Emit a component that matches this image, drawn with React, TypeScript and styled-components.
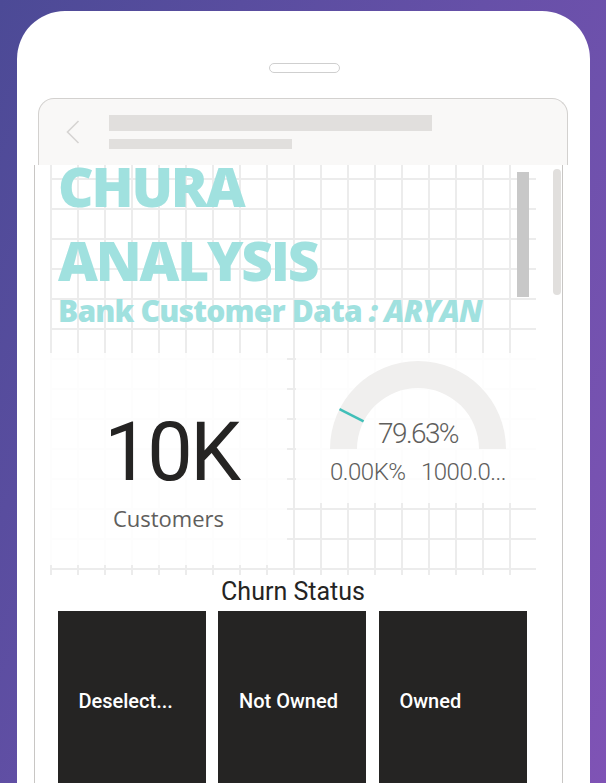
import React from "react";
import styled, { createGlobalStyle } from "styled-components";

const Global = createGlobalStyle`
  html, body { margin: 0; padding: 0; }
  body {
    width: 606px;
    height: 783px;
    overflow: hidden;
    background: linear-gradient(115deg, #4c4a96 0%, #6650a8 50%, #7f53b5 100%);
    font-family: "Open Sans", "Noto Sans", sans-serif;
  }
`;

const Phone = styled.div`
  margin: 11px 0 0 17px;
  width: 573px;
  height: 772px;
  background: #ffffff;
  border-radius: 48px 48px 0 0;
  display: flex;
  flex-direction: column;
  box-sizing: border-box;
`;

const Speaker = styled.div`
  align-self: center;
  margin-top: 52px;
  margin-left: 1px;
  width: 71px;
  height: 10px;
  box-sizing: border-box;
  border: 1px solid #cfcfcf;
  border-radius: 6px;
`;

const Header = styled.div`
  margin: 25px 0 0 21px;
  width: 530px;
  height: 67px;
  box-sizing: border-box;
  border: 1px solid #d3d1cf;
  border-bottom: none;
  border-radius: 16px 16px 0 0;
  background: #f9f8f7;
  display: flex;
  align-items: center;
  padding-left: 27px;
  gap: 29px;
`;

const Bars = styled.div`
  display: flex;
  flex-direction: column;
  gap: 8px;
`;

const Bar = styled.div<{ $w: number; $h: number }>`
  width: ${(p) => p.$w}px;
  height: ${(p) => p.$h}px;
  background: #e1dfdd;
`;

const Screen = styled.div`
  position: relative;
  margin-left: 17px;
  width: 529px;
  flex: 1;
  box-sizing: border-box;
  border-left: 1px solid #c8c6c4;
  border-right: 1px solid #c8c6c4;
  background: #ffffff;
  overflow: hidden;
  padding-left: 15px;
`;

const PageScroll = styled.div`
  position: absolute;
  left: 518px;
  top: 4px;
  width: 8px;
  height: 126px;
  border-radius: 4px;
  background: #e1dfdd;
`;

const Canvas = styled.div`
  width: 486px;
  height: 410px;
  display: flex;
  flex-direction: column;
  background-image: linear-gradient(to right, #ececec 0 2px, transparent 2px),
    linear-gradient(to bottom, #ececec 0 2px, transparent 2px);
  background-size: 27px 30px;
  background-position: 0 13px;
`;

const TitleBlock = styled.div`
  position: relative;
  height: 188px;
  flex: none;
  display: flow-root;
  padding-left: 8px;
  color: #a0e1df;
  font-family: "Open Sans", "Noto Sans", sans-serif;
  font-weight: 800;
`;

const BigLine = styled.div`
  font-size: 55px;
  line-height: 74px;
  letter-spacing: -2.2px;
  white-space: nowrap;
  &:first-child { margin-top: -16px; }
`;

const SubLine = styled.div`
  margin-top: -5px;
  font-size: 30px;
  line-height: 38px;
  letter-spacing: -0.8px;
  white-space: nowrap;
  em { font-style: italic; }
`;

const TitleScroll = styled.div`
  position: absolute;
  left: 467px;
  top: 7px;
  width: 12px;
  height: 125px;
  background: #c8c8c8;
`;

const CardRow = styled.div`
  display: flex;
  align-items: flex-start;
  gap: 9px;
`;

const Panel = styled.div<{ $w: number; $h: number }>`
  width: ${(p) => p.$w}px;
  height: ${(p) => p.$h}px;
  background: rgba(255, 255, 255, 0.86);
  display: flex;
  flex-direction: column;
  align-items: center;
  box-sizing: border-box;
`;

const BigNumber = styled.div`
  margin-top: 52px;
  font-family: Roboto, "Liberation Sans", sans-serif;
  font-size: 81px;
  line-height: 96px;
  letter-spacing: -2.5px;
  color: #252423;
  margin-left: 6px;
`;

const CardLabel = styled.div`
  margin-top: 3px;
  font-family: "Open Sans", "Noto Sans", sans-serif;
  font-size: 22px;
  line-height: 28px;
  color: #605e5c;
`;

const GaugeBox = styled.div`
  position: relative;
  margin-top: 8px;
  margin-left: 4px;
  width: 176px;
  height: 88px;
`;

const GaugeValue = styled.div`
  position: absolute;
  left: 0;
  right: 0;
  top: 56px;
  text-align: center;
  font-family: Roboto, "Liberation Sans", sans-serif;
  font-weight: 300;
  font-size: 28px;
  line-height: 34px;
  letter-spacing: -1.6px;
  color: #605e5c;
`;

const GaugeLabels = styled.div`
  margin-top: 8px;
  margin-left: 4px;
  width: 176px;
  display: flex;
  justify-content: space-between;
  font-family: Roboto, "Liberation Sans", sans-serif;
  font-weight: 300;
  font-size: 24px;
  line-height: 30px;
  letter-spacing: -0.5px;
  color: #605e5c;
`;

const Slicer = styled.div`
  width: 486px;
  display: flex;
  flex-direction: column;
  align-items: center;
  background: #ffffff;
`;

const SlicerTitle = styled.div`
  margin-top: 2px;
  font-family: Roboto, "Liberation Sans", sans-serif;
  font-size: 25px;
  line-height: 30px;
  color: #252423;
`;

const Tiles = styled.div`
  margin-top: 4px;
  display: flex;
  gap: 12.5px;
  margin-left: -2px;
`;

const Tile = styled.div`
  width: 148px;
  height: 180px;
  background: #252423;
  color: #ffffff;
  display: flex;
  align-items: center;
  padding-left: 21px;
  box-sizing: border-box;
  font-family: Roboto, "Liberation Sans", sans-serif;
  font-weight: 500;
  font-size: 20px;
  white-space: nowrap;
`;

const Chevron = () => (
  <svg width="14" height="24" viewBox="0 0 14 24" style={{ flex: "none" }}>
    <polyline points="12.5,1 1.5,12 12.5,23" fill="none" stroke="#d6d4d2" strokeWidth="1.6" />
  </svg>
);

const Gauge = () => {
  const cx = 88, cy = 88, ro = 88, ri = 61;
  const a = (26.9 * Math.PI) / 180;
  const x1 = cx - Math.cos(a) * ro, y1 = cy - Math.sin(a) * ro;
  const x2 = cx - Math.cos(a) * ri, y2 = cy - Math.sin(a) * ri;
  return (
    <svg width="176" height="88" viewBox="0 0 176 88">
      <path
        d={`M ${cx - ro} ${cy} A ${ro} ${ro} 0 0 1 ${cx + ro} ${cy} L ${cx + ri} ${cy} A ${ri} ${ri} 0 0 0 ${cx - ri} ${cy} Z`}
        fill="#f0efee"
      />
      <line x1={x1} y1={y1} x2={x2} y2={y2} stroke="#41bfb8" strokeWidth="2.6" />
    </svg>
  );
};

export default function App() {
  return (
    <>
      <Global />
      <Phone>
        <Speaker />
        <Header>
          <Chevron />
          <Bars>
            <Bar $w={323} $h={16} />
            <Bar $w={183} $h={10} />
          </Bars>
        </Header>
        <Screen>
          <Canvas>
            <TitleBlock>
              <BigLine>CHURA</BigLine>
              <BigLine>ANALYSIS</BigLine>
              <SubLine>
                Bank Customer Data <em>: ARYAN</em>
              </SubLine>
              <TitleScroll />
            </TitleBlock>
            <CardRow>
              <Panel $w={237} $h={212}>
                <BigNumber>10K</BigNumber>
                <CardLabel>Customers</CardLabel>
              </Panel>
              <Panel $w={240} $h={150}>
                <GaugeBox>
                  <Gauge />
                  <GaugeValue>79.63%</GaugeValue>
                </GaugeBox>
                <GaugeLabels>
                  <span>0.00K%</span>
                  <span>1000.0...</span>
                </GaugeLabels>
              </Panel>
            </CardRow>
          </Canvas>
          <Slicer>
            <SlicerTitle>Churn Status</SlicerTitle>
            <Tiles>
              <Tile>Deselect...</Tile>
              <Tile>Not Owned</Tile>
              <Tile>Owned</Tile>
            </Tiles>
          </Slicer>
          <PageScroll />
        </Screen>
      </Phone>
    </>
  );
}
